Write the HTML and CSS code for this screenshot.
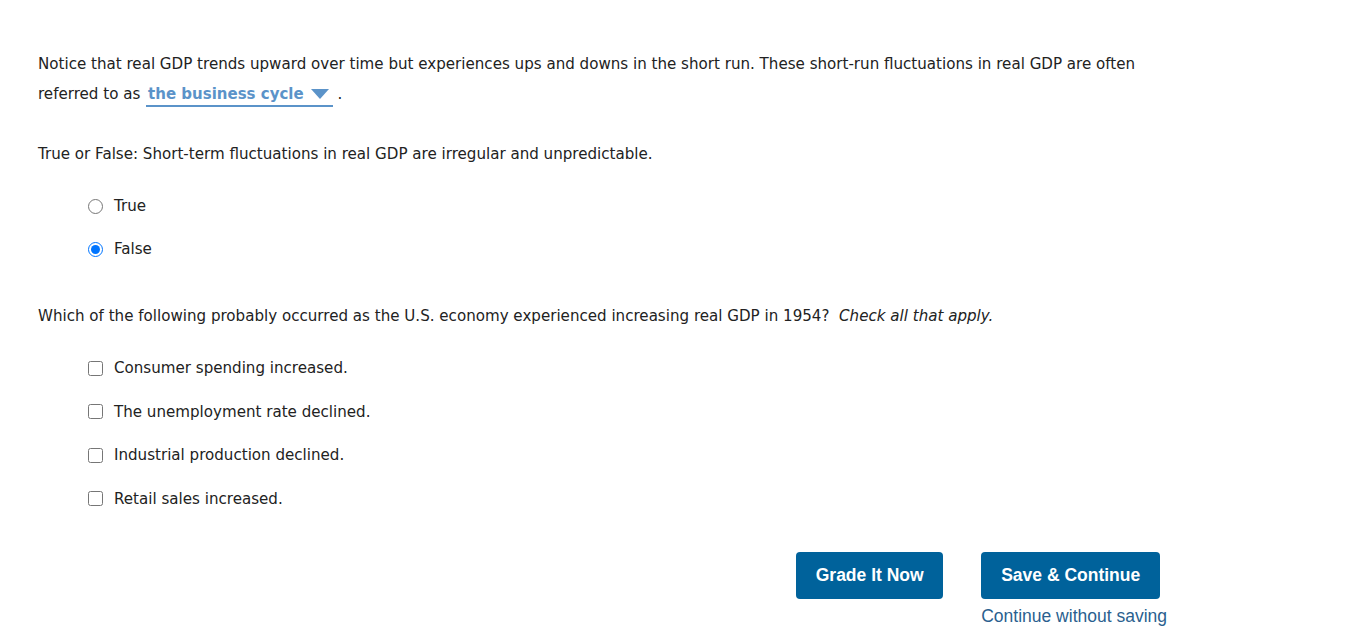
FILE: index.html
```html
<!DOCTYPE html>
<html>
<head>
<meta charset="utf-8">
<link rel="stylesheet" href="styles.css">
</head>
<body>
<div class="page">
  <p class="para">Notice that real GDP trends upward over time but experiences ups and downs in the short run. These short-run fluctuations in real GDP are often referred to as <span class="dropdown"><span class="dd-text">the business cycle</span><svg class="dd-arrow" width="18" height="10" viewBox="0 0 18 10"><path d="M0 0 H18 L9 10 Z" fill="#5b93c9"/></svg></span> .</p>

  <p class="question q2">True or False: Short-term fluctuations in real GDP are irregular and unpredictable.</p>
  <div class="options">
    <label class="opt"><input type="radio" name="tf"> True</label>
    <label class="opt"><input type="radio" name="tf" checked> False</label>
  </div>

  <p class="question q3">Which of the following probably occurred as the U.S. economy experienced increasing real GDP in 1954?&nbsp; <em>Check all that apply.</em></p>
  <div class="options">
    <label class="opt"><input type="checkbox"> Consumer spending increased.</label>
    <label class="opt"><input type="checkbox"> The unemployment rate declined.</label>
    <label class="opt"><input type="checkbox"> Industrial production declined.</label>
    <label class="opt"><input type="checkbox"> Retail sales increased.</label>
  </div>

  <div class="actions">
    <button class="btn">Grade It Now</button>
    <div class="save-col">
      <button class="btn btn-save">Save &amp; Continue</button>
      <a class="link" href="#">Continue without saving</a>
    </div>
  </div>
</div>
</body>
</html>
```
FILE: styles.css
```css
html, body { margin: 0; padding: 0; background: #fff; }
body {
  font-family: "DejaVu Sans", Verdana, sans-serif;
  font-size: 15.1px;
  color: #222;
}
.page { padding: 49px 0 0 38px; width: 1129px; }
.para { margin: 0; line-height: 30px; }
.dropdown {
  display: inline-flex;
  align-items: center;
  gap: 7px;
  padding: 0 3px 0 2px;
  border-bottom: 2px solid #5b93c9;
  line-height: 22px;
  margin-left: 1px;
}
.dd-text { color: #5b93c9; font-weight: bold; font-size: 15px; }
.dd-arrow { display: block; margin-right: 1px; }
.question { margin: 0; line-height: 20px; }
.q2 { margin-top: 35px; }
.q3 { margin-top: 47px; }
.options { display: flex; flex-direction: column; gap: 23px; padding-left: 50px; margin-top: 32px; }
.opt { display: flex; align-items: center; gap: 11px; line-height: 20px; }
.opt input { width: 15px; height: 15px; margin: 0; }
.q3 + .options { gap: 23.5px; }
.actions { display: flex; justify-content: flex-end; gap: 38px; margin-top: 43px; }
.btn {
  background: #00629b;
  color: #fff;
  border: 0;
  border-radius: 4px;
  font-family: "Liberation Sans", Arial, sans-serif;
  font-weight: bold;
  font-size: 17.5px;
  height: 47px;
  width: 147px;
  padding: 0;
  cursor: pointer;
}
.save-col { display: flex; flex-direction: column; align-items: flex-start; }
.btn-save { width: 179px; }
.link {
  font-family: "Liberation Sans", Arial, sans-serif;
  font-size: 17.5px;
  color: #2a5f8f;
  text-decoration: none;
  margin-top: 7px;
}
```
